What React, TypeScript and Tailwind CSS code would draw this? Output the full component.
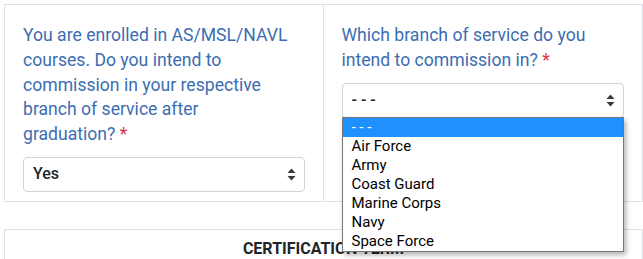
import React from 'react';

const Arrows = () => (
  <svg width="9" height="13" viewBox="0 0 9 13" className="text-[#343a40]">
    <path d="M4.5 0.5 L8.5 5 L0.5 5 Z" fill="currentColor" />
    <path d="M4.5 12.5 L8.5 8 L0.5 8 Z" fill="currentColor" />
  </svg>
);

const SelectBox = ({ value }: { value: string }) => (
  <div className="flex h-[35px] items-center justify-between rounded-[4px] border border-[#ced4da] bg-white pl-[9px] pr-[8px] text-[16px] font-medium text-[#212529]">
    <span>{value}</span>
    <Arrows />
  </div>
);

const Label = ({ children }: { children: React.ReactNode }) => (
  <p className="mb-[10px] max-w-[268px] text-[17.6px] leading-[24.75px] text-[#3c6db1]">
    {children} <span className="text-[#dc3545]">*</span>
  </p>
);

const options = ['- - -', 'Air Force', 'Army', 'Coast Guard', 'Marine Corps', 'Navy', 'Space Force'];

export default function App() {
  return (
    <div className="h-[259px] overflow-hidden bg-white pl-1 pt-1 font-['Roboto',sans-serif]">
      <div className="grid grid-cols-2 border border-[#dee2e6]">
        <div className="border-r border-[#dee2e6] px-[18px] pb-[9px] pt-[18px]">
          <Label>
            You are enrolled in AS/MSL/NAVL courses. Do you intend to commission in your respective branch of
            service after graduation?
          </Label>
          <SelectBox value="Yes" />
        </div>
        <div className="px-[18px] pb-[9px] pt-[18px]">
          <Label>Which branch of service do you intend to commission in?</Label>
          <div className="relative">
            <SelectBox value="- - -" />
            <ul className="absolute left-0 right-0 top-[34px] z-10 border border-[#767676] bg-white text-[15px] leading-[19px] text-black shadow-[2px_3px_5px_rgba(0,0,0,0.3)]">
              {options.map((o, i) => (
                <li key={o} className={i === 0 ? 'bg-[#1e90ff] pl-[9px] text-white' : 'pl-[9px]'}>
                  {o}
                </li>
              ))}
            </ul>
          </div>
        </div>
      </div>

      <div className="mt-[27px] border border-[#dee2e6] pt-[7px] text-center">
        <h3 className="text-[16px] font-bold text-[#212529]">CERTIFICATION TERM</h3>
      </div>
    </div>
  );
}
